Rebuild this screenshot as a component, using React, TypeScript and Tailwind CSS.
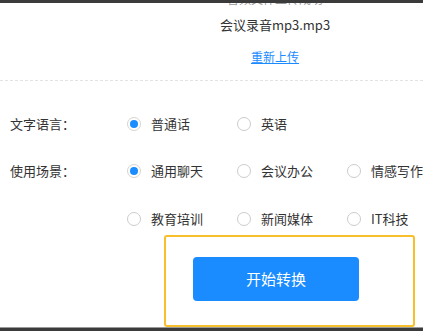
import React, { useState } from 'react';

const font = { fontFamily: '"Noto Sans CJK SC", "Noto Sans", sans-serif' };

type RadioProps = { label: string; checked: boolean; onSelect: () => void };

const Radio: React.FC<RadioProps> = ({ label, checked, onSelect }) => (
  <button type="button" onClick={onSelect} className="flex w-[110px] shrink-0 items-center text-left">
    <span
      className={`flex h-[14px] w-[14px] shrink-0 items-center justify-center rounded-full border bg-white ${
        checked ? 'border-[#d9d4cc]' : 'border-[#cccccc]'
      }`}
    >
      {checked && <span className="h-[8px] w-[8px] rounded-full bg-[#1a8cff]" />}
    </span>
    <span className="ml-[10px] whitespace-nowrap text-[13px] text-[#333333]">{label}</span>
  </button>
);

const App: React.FC = () => {
  const [lang, setLang] = useState('普通话');
  const [scene, setScene] = useState('通用聊天');

  return (
    <div className="relative h-[331px] w-[423px] overflow-hidden bg-white" style={font}>
      {/* top strip */}
      <div className="relative h-[8px] overflow-hidden pl-[127px]">
        <p className="-mt-[9px] text-center text-[12px] leading-[16px] text-[#999999]">音频文件上传成功</p>
        <div className="absolute inset-x-0 top-0 h-[3px] bg-[#3b3b3b]" />
      </div>

      <div className="pl-[127px] text-center">
        <p className="mt-[8px] text-[13px] leading-[18px] text-[#333333]">会议录音mp3.mp3</p>
        <a href="#" className="mt-[15px] inline-block text-[12px] leading-[16px] text-[#1a8cff] underline">
          重新上传
        </a>
      </div>

      <div className="mt-[13px] border-t border-dashed border-[#e3e3e3]" />

      <div className="mt-[33px] flex h-[20px] items-center">
        <span className="w-[127px] shrink-0 pl-[10px] text-[13px] text-[#333333]">文字语言：</span>
        {['普通话', '英语'].map((l) => (
          <Radio key={l} label={l} checked={lang === l} onSelect={() => setLang(l)} />
        ))}
      </div>

      <div className="mt-[27px] flex h-[20px] items-center">
        <span className="w-[127px] shrink-0 pl-[10px] text-[13px] text-[#333333]">使用场景：</span>
        {['通用聊天', '会议办公', '情感写作'].map((l) => (
          <Radio key={l} label={l} checked={scene === l} onSelect={() => setScene(l)} />
        ))}
      </div>

      <div className="mt-[28px] flex h-[20px] items-center pl-[127px]">
        {['教育培训', '新闻媒体', 'IT科技'].map((l) => (
          <Radio key={l} label={l} checked={scene === l} onSelect={() => setScene(l)} />
        ))}
      </div>

      <div className="ml-[164px] mt-[6px] h-[92px] w-[251px] rounded-[3px] border-[2px] border-[#f7bf2a] pl-[27px] pt-[20px]">
        <button
          type="button"
          className="h-[44px] w-[166px] rounded-[4px] bg-[#1a8cff] text-[15px] text-white"
        >
          开始转换
        </button>
      </div>

      <div className="h-[4px] border-t border-[#9a9a9a] bg-[#3b3b3b]" />
    </div>
  );
};

export default App;
